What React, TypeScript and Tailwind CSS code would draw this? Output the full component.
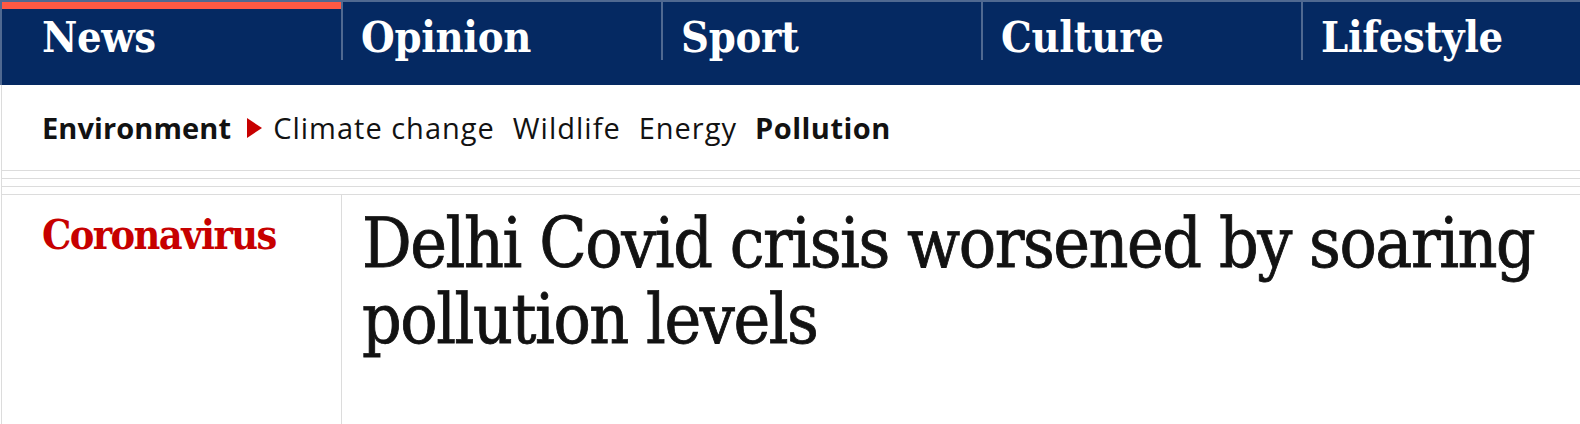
export default function App() {
  const pillars = ["Opinion", "Sport", "Culture", "Lifestyle"];
  const serif = "font-['DejaVu_Serif','Liberation_Serif',serif] font-stretch-condensed";
  return (
    <div className="w-[1580px] h-[424px] overflow-hidden bg-white">
      <nav className="h-[85px] bg-[#052962] border-t-2 border-l-2 border-[#506991] flex items-start overflow-hidden">
        <a className={`shrink-0 w-[339px] h-[58px] border-t-[7px] border-[#ff5943] pl-[40px] pt-[7px] text-white font-bold text-[43px] leading-[43px] tracking-[-0.3px] ${serif}`}>
          News
        </a>
        {pillars.map((p) => (
          <a
            key={p}
            className={`shrink-0 w-[320px] h-[58px] border-l-2 border-[#506991] pl-[18px] pt-[14px] text-white font-bold text-[43px] leading-[43px] tracking-[-0.3px] ${serif}`}
          >
            {p}
          </a>
        ))}
      </nav>
      <div className="ml-px border-l border-[#dcdcdc] h-[339px] flex flex-col">
        <div className="h-[85px] flex items-center pl-[40px] text-[29px] text-[#121212] font-['Open_Sans','Noto_Sans',sans-serif]">
          <span className="font-bold tracking-[0.1px]">Environment</span>
          <svg width="15" height="20" viewBox="0 0 15 20" className="ml-[16px] mr-[11px]">
            <path d="M0 0 L15 10 L0 20 Z" fill="#c70000" />
          </svg>
          <span className="tracking-[1px]">Climate change</span>
          <span className="ml-[18px] tracking-[1px]">Wildlife</span>
          <span className="ml-[18px] tracking-[1px]">Energy</span>
          <span className="ml-[18px] font-bold tracking-[0.5px]">Pollution</span>
        </div>
        <div className="flex flex-col gap-[7px]">
          <div className="h-px bg-[#dcdcdc]" />
          <div className="h-px bg-[#dcdcdc]" />
          <div className="h-px bg-[#dcdcdc]" />
          <div className="h-px bg-[#dcdcdc]" />
        </div>
        <div className="flex flex-1">
          <div className="w-[339px] shrink-0 pl-[40px] pt-[20px]">
            <span className={`text-[#c70000] font-bold text-[41px] leading-[41px] tracking-[-1.6px] ${serif}`}>Coronavirus</span>
          </div>
          <div className="flex-1 border-l border-[#dcdcdc] pl-[20px] pt-[10px] pr-[10px]">
            <h1 className={`text-[#121212] font-normal text-[69px] leading-[76px] tracking-[-1.45px] [-webkit-text-stroke:0.8px_#121212] ${serif}`}>
              Delhi Covid crisis worsened by soaring pollution levels
            </h1>
          </div>
        </div>
      </div>
    </div>
  );
}
